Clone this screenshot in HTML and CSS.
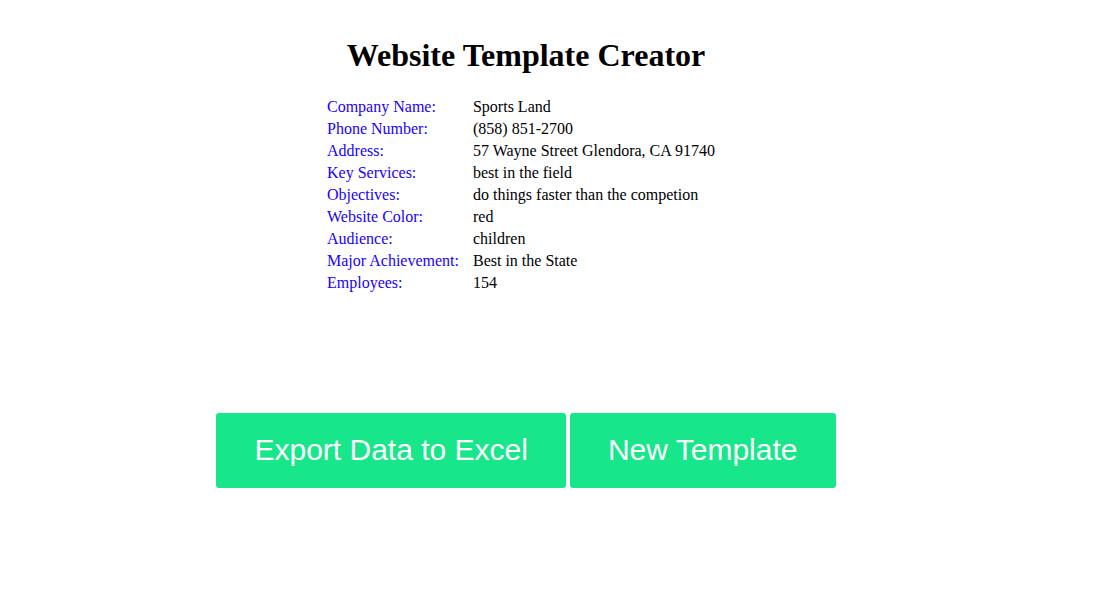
FILE: index.html
```html
<!DOCTYPE html>
<html>
<head>
<meta charset="utf-8">
<link rel="stylesheet" href="styles.css">
</head>
<body>
<div class="page">
  <h1 class="title">Website Template Creator</h1>
  <div class="info-wrap">
    <table class="info">
      <tr><td class="label">Company Name:</td><td>Sports Land</td></tr>
      <tr><td class="label">Phone Number:</td><td>(858) 851-2700</td></tr>
      <tr><td class="label">Address:</td><td>57 Wayne Street Glendora, CA 91740</td></tr>
      <tr><td class="label">Key Services:</td><td>best in the field</td></tr>
      <tr><td class="label">Objectives:</td><td>do things faster than the competion</td></tr>
      <tr><td class="label">Website Color:</td><td>red</td></tr>
      <tr><td class="label">Audience:</td><td>children</td></tr>
      <tr><td class="label">Major Achievement:</td><td>Best in the State</td></tr>
      <tr><td class="label">Employees:</td><td>154</td></tr>
    </table>
  </div>
  <div class="actions">
    <button class="btn">Export Data to Excel</button>
    <button class="btn">New Template</button>
  </div>
</div>
</body>
</html>
```
FILE: styles.css
```css
html, body {
  margin: 0;
  padding: 0;
  background: #ffffff;
}
.page {
  width: 1052px;
  font-family: "Liberation Serif", "Times New Roman", serif;
  color: #000;
}
.title {
  margin: 0;
  padding-top: 37px;
  font-size: 32px;
  font-weight: bold;
  text-align: center;
  line-height: 37px;
}
.info-wrap {
  padding-left: 324px;
  padding-top: 21px;
}
.info {
  border-collapse: separate;
  border-spacing: 2px;
  font-size: 16px;
}
.info td {
  padding: 1px;
  line-height: 18px;
  vertical-align: middle;
}
.info td.label {
  color: #1a00ff;
  padding-right: 11px;
}
.actions {
  display: flex;
  justify-content: center;
  gap: 4px;
  padding-top: 118px;
}
.btn {
  height: 75px;
  padding: 0 38px;
  border: none;
  border-radius: 3px;
  background: #17e68a;
  color: #ffffff;
  font-family: "Liberation Sans", Arial, sans-serif;
  font-size: 30px;
  line-height: 34px;
  padding-bottom: 2px;
}
```
